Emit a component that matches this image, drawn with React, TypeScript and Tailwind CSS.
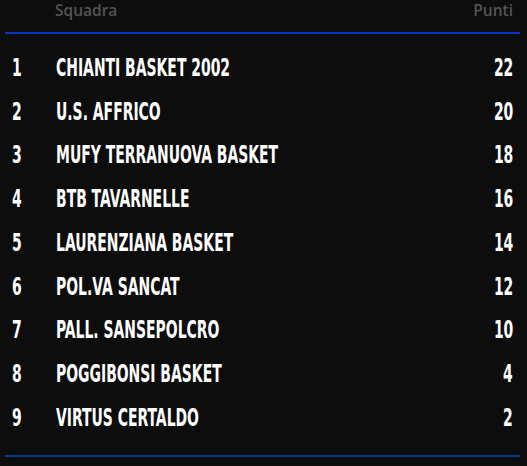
import React from "react";

const rows: [number, string, number][] = [
  [1, "CHIANTI BASKET 2002", 22],
  [2, "U.S. AFFRICO", 20],
  [3, "MUFY TERRANUOVA BASKET", 18],
  [4, "BTB TAVARNELLE", 16],
  [5, "LAURENZIANA BASKET", 14],
  [6, "POL.VA SANCAT", 12],
  [7, "PALL. SANSEPOLCRO", 10],
  [8, "POGGIBONSI BASKET", 4],
  [9, "VIRTUS CERTALDO", 2],
];

export default function App() {
  return (
    <div className="w-[527px] h-[466px] bg-[#0d0d0d] overflow-hidden">
      <div className="flex items-start h-[32px] pl-[55px] pr-[14px] text-[15.5px] leading-[21px] font-semibold text-[#545454] font-['Open_Sans',sans-serif]">
        <span className="flex-1">Squadra</span>
        <span>Punti</span>
      </div>
      <div className="ml-[5px] w-[515px] h-[2px] bg-[#0a34c8]" />
      <div className="pt-[11.5px] pb-[16px]">
        {rows.map(([r, name, pts]) => (
          <div
            key={r}
            className="flex items-center h-[43.75px] text-white font-bold text-[25px] leading-none font-['DejaVu_Sans_Condensed',sans-serif]"
          >
            <div className="w-[56px] pl-[12px]">
              <span className="inline-block origin-left scale-x-[0.62]">{r}</span>
            </div>
            <div className="flex-1">
              <span className="inline-block origin-left scale-x-[0.62] whitespace-nowrap">{name}</span>
            </div>
            <div className="pr-[14px]">
              <span className="inline-block origin-right scale-x-[0.62]">{pts}</span>
            </div>
          </div>
        ))}
      </div>
      <div className="ml-[5px] w-[515px] h-[2px] bg-[#0b3a8c]" />
    </div>
  );
}
